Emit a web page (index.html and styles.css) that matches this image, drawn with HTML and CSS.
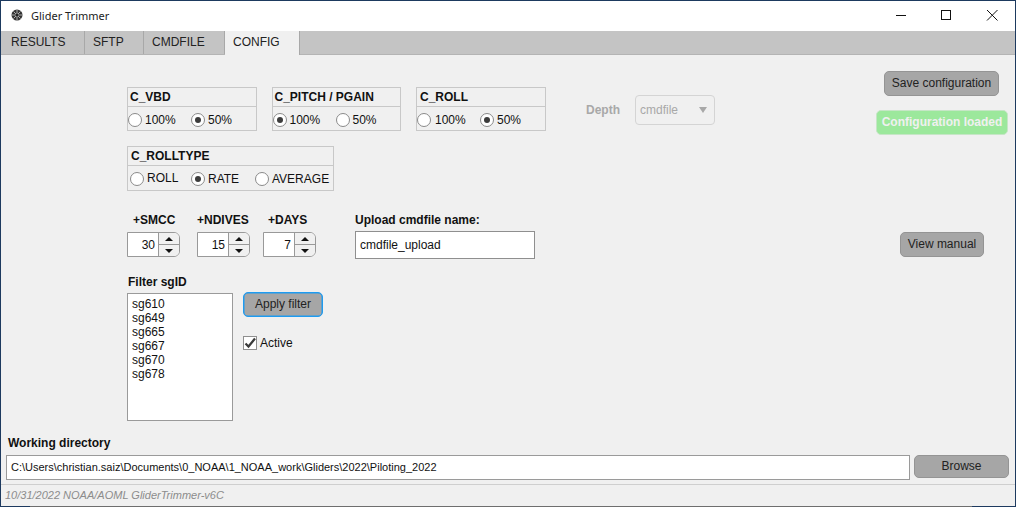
FILE: index.html
```html
<!DOCTYPE html>
<html lang="en">
    <head>
        <meta charset="UTF-8" />
        <title>Glider Trimmer</title>
        <link rel="stylesheet" href="styles.css">
    </head>
    <body>
        <div class="window">
            <header class="titlebar">
                <svg class="app-icon" width="12" height="12" viewBox="0 0 12 12">
                    <circle cx="6" cy="6" r="5.500" fill="#333" />
                    <path d="M6 1v10M1 6h10M2.500 2.500l7 7M9.500 2.500l-7 7" stroke="#ccc" stroke-width="0.800" />
                    <circle cx="6" cy="6" r="1.300" fill="#222" />
                </svg>
                <span class="app-title">Glider Trimmer</span>
                <div class="win-buttons">
                    <svg width="46" height="30" viewBox="0 0 46 30"><path d="M19 14.500h10" stroke="#111" fill="none" /></svg>
                    <svg width="46" height="30" viewBox="0 0 46 30"><rect x="18.500" y="9.500" width="9" height="9" stroke="#111" fill="none" /></svg>
                    <svg width="46" height="30" viewBox="0 0 46 30"><path d="M18 9l10.500 10.500M28.500 9L18 19.500" stroke="#111" fill="none" /></svg>
                </div>
            </header>

            <nav class="tabs">
                <a class="tab tab-results">RESULTS</a>
                <a class="tab tab-sftp">SFTP</a>
                <a class="tab tab-cmdfile">CMDFILE</a>
                <a class="tab tab-config active">CONFIG</a>
            </nav>

            <main class="content">
                <div class="columns">
                    <section class="controls">
                        <div class="row-panels">
                            <fieldset class="panel">
                                <div class="panel-title">C_VBD</div>
                                <div class="panel-body">
                                    <label class="opt"><input type="radio" name="vbd" />100%</label>
                                    <label class="opt"><input type="radio" name="vbd" checked />50%</label>
                                </div>
                            </fieldset>
                            <fieldset class="panel">
                                <div class="panel-title">C_PITCH / PGAIN</div>
                                <div class="panel-body">
                                    <label class="opt"><input type="radio" name="pitch" checked />100%</label>
                                    <label class="opt"><input type="radio" name="pitch" />50%</label>
                                </div>
                            </fieldset>
                            <fieldset class="panel panel-roll">
                                <div class="panel-title">C_ROLL</div>
                                <div class="panel-body">
                                    <label class="opt"><input type="radio" name="roll" />100%</label>
                                    <label class="opt"><input type="radio" name="roll" checked />50%</label>
                                </div>
                            </fieldset>
                            <div class="depth">
                                <span class="depth-label">Depth</span>
                                <div class="dropdown">
                                    <span>cmdfile</span>
                                    <i class="caret"></i>
                                </div>
                            </div>
                        </div>

                        <fieldset class="panel panel-wide">
                            <div class="panel-title">C_ROLLTYPE</div>
                            <div class="panel-body">
                                <label class="opt"><input type="radio" name="rolltype" /><span class="opt-raised">ROLL</span></label>
                                <label class="opt"><input type="radio" name="rolltype" checked />RATE</label>
                                <label class="opt"><input type="radio" name="rolltype" />AVERAGE</label>
                            </div>
                        </fieldset>

                        <div class="row-spinners">
                            <div class="field field-smcc">
                                <span class="field-label">+SMCC</span>
                                <div class="spinner">
                                    <span class="spin-value">30</span>
                                    <div class="spin-arrows"><b class="up"></b><b class="down"></b></div>
                                </div>
                            </div>
                            <div class="field field-ndives">
                                <span class="field-label">+NDIVES</span>
                                <div class="spinner">
                                    <span class="spin-value">15</span>
                                    <div class="spin-arrows"><b class="up"></b><b class="down"></b></div>
                                </div>
                            </div>
                            <div class="field field-days">
                                <span class="field-label">+DAYS</span>
                                <div class="spinner">
                                    <span class="spin-value">7</span>
                                    <div class="spin-arrows"><b class="up"></b><b class="down"></b></div>
                                </div>
                            </div>
                            <div class="field field-upload">
                                <span class="field-label">Upload cmdfile name:</span>
                                <div class="text-input">cmdfile_upload</div>
                            </div>
                        </div>

                        <div class="filter">
                            <span class="filter-label">Filter sgID</span>
                            <div class="filter-row">
                                <ul class="listbox">
                                    <li>sg610</li>
                                    <li>sg649</li>
                                    <li>sg665</li>
                                    <li>sg667</li>
                                    <li>sg670</li>
                                    <li>sg678</li>
                                </ul>
                                <div class="filter-actions">
                                    <button class="btn btn-apply">Apply filter</button>
                                    <label class="check">
                                        <span class="check-box">
                                            <svg width="12" height="12" viewBox="0 0 12 12"><path d="M1.500 6.500l3 3L11 1.500" stroke="#3a3a3a" stroke-width="2.200" fill="none" /></svg>
                                        </span>
                                        Active
                                    </label>
                                </div>
                            </div>
                        </div>
                    </section>

                    <aside class="side">
                        <button class="btn btn-save">Save configuration</button>
                        <div class="loaded">Configuration loaded</div>
                        <button class="btn btn-manual">View manual</button>
                    </aside>
                </div>

                <div class="workdir">
                    <div class="workdir-label">Working directory</div>
                    <div class="workdir-row">
                        <div class="path-input">C:\Users\christian.saiz\Documents\0_NOAA\1_NOAA_work\Gliders\2022\Piloting_2022</div>
                        <button class="btn btn-browse">Browse</button>
                    </div>
                </div>
            </main>

            <footer class="statusbar">10/31/2022 NOAA/AOML GliderTrimmer-v6C</footer>
            <div class="bottom-edge"></div>
        </div>
    </body>
</html>
```

FILE: styles.css
```css
* {
    margin: 0;
    padding: 0;
    box-sizing: border-box;
}
html,
body {
    width: 1016px;
    height: 507px;
    overflow: hidden;
}
body {
    font-family: 'Liberation Sans', Arial, sans-serif;
    font-size: 12px;
    color: #111;
    background: #f0f0f0;
}
.window {
    width: 1016px;
    height: 507px;
    display: flex;
    flex-direction: column;
    border: 1px solid #1d3a5f;
    border-bottom: 0;
    background: #f0f0f0;
}

/* title bar */
.titlebar {
    height: 30px;
    flex: none;
    display: flex;
    align-items: center;
    background: #fff;
    padding: 0 0 2px 10px;
}
.app-title {
    margin-left: 8px;
    font-family: 'Noto Sans', sans-serif;
    font-size: 11px;
    color: #222;
}
.win-buttons {
    margin-left: auto;
    display: flex;
    align-self: flex-start;
}

/* tabs */
.tabs {
    height: 24px;
    flex: none;
    display: flex;
    background: #c4c4c4;
    border-bottom: 1px solid #b4b4b4;
    padding-left: 1px;
}
.tab {
    display: block;
    height: 23px;
    line-height: 23px;
    padding-left: 8px;
    border-right: 1px solid #a8a8a8;
    border-left: 1px solid #c4c4c4;
    color: #222;
}
.tab + .tab {
    padding-left: 7px;
}
.tab-results { width: 83px; }
.tab-sftp { width: 59px; }
.tab-cmdfile { width: 81px; }
.tab-config { width: 75px; }
.tab.active {
    height: 24px;
    background: #f0f0f0;
    border-left-color: #f0f0f0;
}

/* main area */
.content {
    flex: 1;
    display: flex;
    flex-direction: column;
}
.columns {
    flex: 1;
    display: flex;
    justify-content: space-between;
}
.controls {
    padding: 32px 0 0 126px;
}
.row-panels {
    display: flex;
    gap: 15px;
}
.panel {
    width: 129.500px;
    height: 44px;
    border: 1px solid #c8c8c8;
}
.panel-title {
    height: 19px;
    line-height: 18px;
    padding-left: 2px;
    border-bottom: 1px solid #c8c8c8;
    font-weight: 700;
}
.panel-body {
    display: flex;
    height: 25px;
    align-items: center;
}
.opt {
    display: flex;
    align-items: center;
    width: 63px;
    gap: 3px;
    white-space: nowrap;
}
.opt input {
    appearance: none;
    width: 14px;
    height: 14px;
    flex: none;
    border: 1px solid #8a8a8a;
    border-radius: 50%;
    background: #fff;
    display: grid;
    place-items: center;
}
.opt input:checked::after {
    content: '';
    width: 6px;
    height: 6px;
    border-radius: 50%;
    background: #3c3c3c;
}
.panel-roll .panel-title {
    padding-left: 3px;
}
.panel-roll .opt:first-child {
    gap: 4px;
}
.panel-wide {
    width: 207px;
    height: 45px;
    margin-top: 15px;
}
.panel-wide .panel-title {
    padding-left: 3px;
}
.panel-wide .panel-body {
    padding-left: 2px;
}
.panel-wide .opt {
    width: 61px;
}
.panel-wide .opt:nth-child(2) {
    width: 64px;
}
.opt-raised {
    padding-bottom: 2px;
}

/* depth dropdown */
.depth {
    display: flex;
    align-items: center;
    margin: 8px 0 0 25.500px;
    height: 30px;
    gap: 15px;
    color: #a8a8a8;
}
.depth-label {
    font-weight: 700;
}
.dropdown {
    width: 80px;
    height: 30px;
    display: flex;
    align-items: center;
    justify-content: space-between;
    padding: 0 6px 0 4px;
    border: 1px solid #d4d4d4;
    border-radius: 4px;
}
.caret {
    width: 0;
    height: 0;
    border-left: 4px solid transparent;
    border-right: 4px solid transparent;
    border-top: 6px solid #a8a8a8;
    margin-right: 1px;
}

/* spinners */
.row-spinners {
    display: flex;
    margin-top: 22px;
}
.field {
    display: flex;
    flex-direction: column;
}
.field-smcc { width: 70px; }
.field-ndives { width: 66px; }
.field-days { width: 92px; }
.field-label {
    height: 18px;
    line-height: 14px;
    font-weight: 700;
    margin-left: 6px;
    white-space: nowrap;
}
.field-ndives .field-label { margin-left: 0; }
.field-days .field-label { margin-left: 5px; }
.field-upload .field-label { margin-left: 0; }
.spinner {
    display: flex;
    height: 25px;
    margin-top: 1px;
    border: 1px solid #999;
    border-radius: 0 6px 6px 0;
    background: #fff;
    width: 53px;
    overflow: hidden;
}
.spin-value {
    flex: 1;
    line-height: 24px;
    font-size: 12px;
    text-align: right;
    padding-right: 3px;
}
.spin-arrows {
    width: 21px;
    flex: none;
    display: flex;
    flex-direction: column;
    background: #f0f0f0;
    border-left: 1px solid #999;
}
.spin-arrows b {
    flex: 1;
    display: grid;
    place-items: center;
}
.spin-arrows .up {
    border-bottom: 1px solid #999;
}
.spin-arrows b::after {
    content: '';
    border-left: 4.500px solid transparent;
    border-right: 4.500px solid transparent;
}
.spin-arrows .up::after {
    border-bottom: 4px solid #111;
}
.spin-arrows .down::after {
    border-top: 4px solid #111;
}
.text-input {
    width: 180px;
    height: 28px;
    line-height: 27px;
    padding-left: 4px;
    border: 1px solid #8f8f8f;
    background: #fff;
}

/* filter */
.filter {
    margin-top: 17px;
}
.filter-label {
    display: block;
    height: 17px;
    line-height: 13px;
    padding-left: 1px;
    font-weight: 700;
}
.filter-row {
    display: flex;
    gap: 10px;
}
.listbox {
    list-style: none;
    width: 106px;
    height: 128px;
    padding: 3px 4px;
    border: 1px solid #9a9a9a;
    background: #fff;
}
.listbox li {
    height: 14px;
    line-height: 14px;
}
.btn {
    display: block;
    font-family: inherit;
    font-size: 12px;
    color: #222;
    background: #a6a6a6;
    border: 1px solid #949494;
    border-radius: 5px;
    height: 25px;
    padding-bottom: 2px;
}
.filter-actions {
    margin-top: -1px;
}
.btn-apply {
    width: 80px;
    border-color: #1e9bf0;
    box-shadow: inset 0 0 0 0.500px #1e9bf0;
}
.check {
    display: flex;
    align-items: center;
    gap: 3px;
    margin-top: 19px;
}
.check-box {
    width: 14px;
    height: 14px;
    border: 1px solid #8f8f8f;
    background: #fff;
    display: grid;
    place-items: center;
}

/* right column */
.side {
    width: 132px;
    margin-right: 7px;
    padding-top: 16px;
    display: flex;
    flex-direction: column;
    align-items: center;
}
.btn-save {
    width: 115px;
    margin-right: 1px;
}
.loaded {
    width: 132px;
    height: 25px;
    margin-top: 14px;
    line-height: 22px;
    text-align: center;
    font-weight: 700;
    font-size: 12px;
    color: #f0f0f0;
    background: #9ce89c;
    border: 1px solid #c6e6c6;
    border-radius: 5px;
}
.btn-manual {
    width: 84px;
    margin-top: 97px;
}

/* working directory */
.workdir {
    flex: none;
    height: 48px;
    padding: 0 6px 0 5px;
    border-bottom: 1px solid #cfcfcf;
}
.workdir-label {
    height: 18px;
    line-height: 12px;
    padding-left: 2px;
    font-weight: 700;
}
.workdir-row {
    display: flex;
    gap: 4px;
    align-items: flex-start;
}
.path-input {
    flex: 1;
    height: 25px;
    line-height: 23px;
    padding-left: 4px;
    font-size: 11px;
    border: 1px solid #9a9a9a;
    background: #fff;
}
.btn-browse {
    width: 95px;
    height: 23px;
}

.statusbar {
    flex: none;
    height: 21px;
    line-height: 21px;
    padding-left: 4px;
    font-size: 11px;
    font-style: italic;
    color: #8c8c8c;
}
.bottom-edge {
    flex: none;
    height: 1px;
    margin: 0 -1px;
    background: linear-gradient(to right, #1d3a5f 30px, #6e6e6e 30px, #6e6e6e 972px, #1d3a5f 972px);
}
```
